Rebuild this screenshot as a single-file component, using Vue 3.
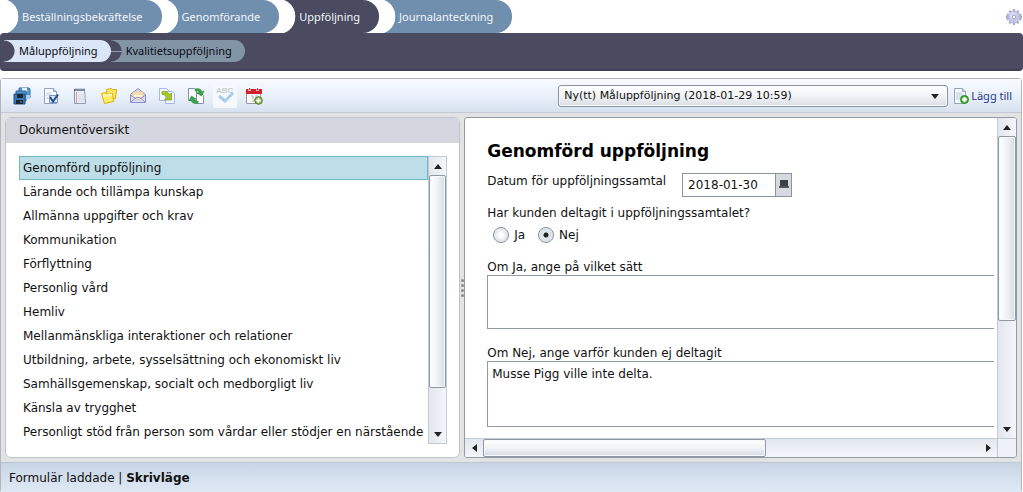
<script setup>
import { ref } from 'vue'

const tabs = ['Beställningsbekräftelse', 'Genomförande', 'Uppföljning', 'Journalanteckning']
const activeTab = ref(2)
const subTabs = ['Måluppföljning', 'Kvalitietsuppföljning']
const activeSub = ref(0)
const sections = [
  'Genomförd uppföljning',
  'Lärande och tillämpa kunskap',
  'Allmänna uppgifter och krav',
  'Kommunikation',
  'Förflyttning',
  'Personlig vård',
  'Hemliv',
  'Mellanmänskliga interaktioner och relationer',
  'Utbildning, arbete, sysselsättning och ekonomiskt liv',
  'Samhällsgemenskap, socialt och medborgligt liv',
  'Känsla av trygghet',
  'Personligt stöd från person som vårdar eller stödjer en närstående',
]
const activeSection = ref(0)
const date = ref('2018-01-30')
const attended = ref('nej')
const how = ref('')
const why = ref('Musse Pigg ville inte delta.')
</script>

<template>
  <div class="page">
    <header class="top">
      <nav class="tabs">
        <button v-for="(t, i) in tabs" :key="t" class="tab" :class="{ active: i === activeTab }" @click="activeTab = i">{{ t }}</button>
      </nav>
      <button class="gear" aria-label="Inställningar">
        <svg width="18" height="18" viewBox="0 0 18 18">
          <path d="M9 1v16M1 9h16M4.300 2.500l9.400 13M13.700 2.500l-9.400 13M1.600 6.500l14.800 5M16.400 6.500l-14.800 5" stroke="#a3a5cd" stroke-width="2" />
          <circle cx="9" cy="9" r="6" fill="#c5c6e6" stroke="#b0b2d8" />
          <circle cx="8" cy="7.500" r="3.500" fill="#d9daf2" />
          <circle cx="9" cy="9" r="1.800" fill="#fff" stroke="#a0a2cc" />
        </svg>
      </button>
    </header>

    <nav class="subbar">
      <button v-for="(t, i) in subTabs" :key="t" class="sub" :class="{ active: i === activeSub }" @click="activeSub = i">{{ t }}</button>
    </nav>

    <main class="shell">
      <div class="toolbar">
        <div class="tools">
          <button class="tool" aria-label="Spara">
            <svg width="18" height="18" viewBox="0 0 18 18">
              <path d="M6 1h10l1 1v9H6z" fill="#5b9bd5" stroke="#3b6ea8" />
              <path d="M9 1h5v4H9z" fill="#e4f0fb" />
              <path d="M3 4h10v10H3z" fill="#4f93cf" stroke="#2f6296" />
              <path d="M1 7h11v10H1z" fill="#3478b8" stroke="#28537e" />
              <path d="M4 7h6v4H4z" fill="#20242c" /><path d="M3 13h7v4H3z" fill="#1d2733" /><path d="M7 14h2v2H7z" fill="#4b5d70" />
              <path d="M13 8h4v4h-4z" fill="#a8cdf0" />
            </svg>
          </button>
          <button class="tool" aria-label="Kontrollera formulär">
            <svg width="18" height="18" viewBox="0 0 18 18">
              <path d="M2.500 1.500h9l3 3v12h-12z" fill="#f7faff" stroke="#8fa3c4" /><path d="M11.500 1.500v3h3" fill="#c9d8ee" stroke="#8fa3c4" />
              <path d="M4 6h5M4 8h6M4 11h3" stroke="#c0cee2" />
              <path d="M7.500 8.500h8v7h-8z" fill="#dbe6f7" stroke="#7f9ac6" />
              <path d="M8 10l3 4.500 5-7" fill="none" stroke="#244c94" stroke-width="2" />
            </svg>
          </button>
          <button class="tool" aria-label="Anteckning">
            <svg width="18" height="18" viewBox="0 0 18 18">
              <path d="M3.500 2.500h10l1 14h-11z" fill="#e9edf5" stroke="#8c99b0" /><path d="M3 2h11v2H3z" fill="#59657a" />
              <path d="M5 1v3M7 1v3M9 1v3M11 1v3M13 1v3" stroke="#a8b4c6" />
              <path d="M5.500 5v11" stroke="#d99" /><path d="M7 8h7M7 10h7M7 12h7M7 14h7" stroke="#d3dae6" />
            </svg>
          </button>
          <button class="tool" aria-label="Mappar">
            <svg width="18" height="18" viewBox="0 0 18 18">
              <path d="M6.500 2.500l5-1 1 1h4l-1 9-8 1z" fill="#ffe65a" stroke="#d5ad1c" />
              <path d="M1.500 6.500l4-1 1 2 6-1 1 8-9 2z" fill="#ffed6a" stroke="#dcae16" /><path d="M3 9l9-1.500" stroke="#fff8ba" stroke-width="2" />
            </svg>
          </button>
          <button class="tool" aria-label="Meddelande">
            <svg width="18" height="18" viewBox="0 0 18 18">
              <path d="M1.500 7.500L9 1.500l7.500 6v8h-15z" fill="#dcddf6" stroke="#8d8fcb" />
              <path d="M4 5h10v5l-5 3-5-3z" fill="#fff4d6" stroke="#e2bd84" /><path d="M5 7h8" stroke="#edc78b" />
              <path d="M1.500 15.500L7 10.500h4l5.500 5M1.500 8L7 12M16.500 8L11 12" fill="none" stroke="#9294ce" />
            </svg>
          </button>
          <button class="tool" aria-label="Kopiera till">
            <svg width="18" height="18" viewBox="0 0 18 18">
              <path d="M1.500 1.500h7l2 2v10h-9z" fill="#f4f7ff" stroke="#a9b6e0" /><path d="M7.500 4.500h7l2 2v10h-9z" fill="#eef3ff" stroke="#a9b6e0" />
              <path d="M4 4.500c4-.5 6 .5 7.500 3L13.500 6v7H6.500L9 10.500C8 8.500 6.500 7.500 4 7.500z" fill="#a7c91e" stroke="#7fa112" stroke-width=".7" />
            </svg>
          </button>
          <button class="tool" aria-label="Uppdatera">
            <svg width="18" height="18" viewBox="0 0 18 18">
              <path d="M1.500 1.500h6l2 2v10h-8z" fill="#fff" stroke="#7d90b8" /><path d="M9.500 6.500h5l2 2v8h-7z" fill="#fff" stroke="#7d90b8" />
              <path d="M8 2c4-1 6 0 7 3l2-1-2.500 5L10 6l2-.5C11 3.500 10 3.500 8 4zM11 16c-4 1-6 0-7-3l-2 1 2.500-5L9 12l-2 .5c1 2 2 2 4 1.500z" fill="#39a845" stroke="#238532" stroke-width=".6" />
            </svg>
          </button>
          <button class="tool faded" aria-label="Stavningskontroll">
            <svg width="20" height="20" viewBox="0 0 20 20">
              <text x="1" y="7" font-family="Liberation Sans, sans-serif" font-size="8" font-weight="bold" fill="#c3d0ca">ABC</text>
              <path d="M4 10l6 5L18 7" fill="none" stroke="#a9ccec" stroke-width="3" />
            </svg>
          </button>
          <button class="tool" aria-label="Ny kalenderpost">
            <svg width="18" height="18" viewBox="0 0 18 18">
              <path d="M1.500 3.500h14v13h-14z" fill="#f8f8fa" stroke="#9b9ba5" /><path d="M1 2h16v5H1z" fill="#d5202c" />
              <path d="M4.500 0v4M12.500 0v4" stroke="#fff" stroke-width="2" /><path d="M4.500 1v2M12.500 1v2" stroke="#555" />
              <path d="M6 9h2v6M10 9h3" fill="none" stroke="#b4b4bc" />
              <circle cx="13.500" cy="13.500" r="3.800" fill="#8fb654" stroke="#527d20" /><path d="M11 13.500h5M13.500 11v5" stroke="#fff" stroke-width="1.600" />
            </svg>
          </button>
        </div>
        <div class="picker">
          <select aria-label="Dokument"><option>Ny(tt) Måluppföljning (2018-01-29 10:59)</option></select>
        </div>
        <button class="add">
          <svg width="16" height="16" viewBox="0 0 16 16">
            <path d="M1.500.5h8l3 3v12h-11z" fill="#f4f7fc" stroke="#94a3ba" /><path d="M9.500.5v3h3" fill="#d2dcec" stroke="#94a3ba" />
            <path d="M3 5h6M3 7h7M3 9h6M3 11h4" stroke="#bdc9dc" /><circle cx="11.500" cy="11.500" r="4" fill="#45b035" stroke="#2f8c25" />
            <path d="M9 11.500h5M11.500 9v5" stroke="#fff" stroke-width="2" />
          </svg>
          <span>Lägg till</span>
        </button>
      </div>

      <div class="work">
        <section class="outline">
          <h2>Dokumentöversikt</h2>
          <div class="listbox">
            <ul>
              <li v-for="(s, i) in sections" :key="s">
                <button :class="{ selected: i === activeSection }" @click="activeSection = i">{{ s }}</button>
              </li>
            </ul>
            <div class="vbar">
              <button class="arrow up" aria-label="Rulla upp"></button>
              <div class="track"><div class="thumb list-thumb"></div></div>
              <button class="arrow down" aria-label="Rulla ned"></button>
            </div>
          </div>
        </section>

        <div class="splitter"><i></i><i></i><i></i><i></i></div>

        <section class="detail">
          <form class="form" @submit.prevent>
            <h1>Genomförd uppföljning</h1>
            <div class="date-row">
              <label for="date">Datum för uppföljningssamtal</label>
              <div class="date">
                <input id="date" v-model="date" type="text" />
                <button type="button" aria-label="Välj datum">
                  <svg width="12" height="12" viewBox="0 0 12 12"><path d="M2 1h8v7H2z" fill="#3c3f46" /><path d="M1 7h10v2H1z" fill="#55585f" /></svg>
                </button>
              </div>
            </div>
            <fieldset>
              <legend>Har kunden deltagit i uppföljningssamtalet?</legend>
              <div class="radios">
                <label><input v-model="attended" type="radio" name="attended" value="ja" />Ja</label>
                <label><input v-model="attended" type="radio" name="attended" value="nej" />Nej</label>
              </div>
            </fieldset>
            <label class="area-label" for="how">Om Ja, ange på vilket sätt</label>
            <textarea id="how" v-model="how" class="short"></textarea>
            <label class="area-label" for="why">Om Nej, ange varför kunden ej deltagit</label>
            <textarea id="why" v-model="why" class="tall"></textarea>
          </form>
          <div class="vbar">
            <button class="arrow up" aria-label="Rulla upp"></button>
            <div class="track"><div class="thumb form-thumb"></div></div>
            <button class="arrow down" aria-label="Rulla ned"></button>
          </div>
          <div class="hbar">
            <button class="arrow left" aria-label="Rulla vänster"></button>
            <div class="track"><div class="thumb wide-thumb"></div></div>
            <button class="arrow right" aria-label="Rulla höger"></button>
          </div>
          <div class="corner"></div>
        </section>
      </div>

      <footer class="status">Formulär laddade | <strong>Skrivläge</strong></footer>
    </main>
  </div>
</template>

<style>
body { background: #fff; }
</style>

<style scoped>
* { box-sizing: border-box; }
button, input, select, textarea { font: inherit; color: inherit; margin: 0; }
button { padding: 0; border: 0; background: none; cursor: pointer; }
svg { display: block; }
.page {
  display: flex; flex-direction: column; min-height: 100vh;
  font-family: "DejaVu Sans", Verdana, sans-serif; font-size: 12px; line-height: 16px; color: #111;
}
.tabs, .subbar, .add { font-family: "Noto Sans", sans-serif; font-size: 11px; }
.top { display: flex; justify-content: space-between; align-items: center; height: 33px; padding: 0 0 0 2px; }
.tabs { display: flex; }
.tab {
  height: 33px; padding: 0 19px 0 20px; color: #f2f6fb; border-radius: 0 16px 16px 0;
  background: radial-gradient(ellipse 17px 18px at 0 50%, #fff 94%, #708fae 98%);
}
.tab.active { background: radial-gradient(ellipse 17px 18px at 0 50%, #fff 94%, #4a4a60 98%); }
.subbar {
  display: flex; align-items: center; height: 38px; padding-left: 4px; background: #4a4a60;
  border-bottom: 2px solid #414156; border-radius: 4px;
}
.sub {
  height: 22px; padding: 0 13px 0 15px; border-radius: 0 11px 11px 0; color: #080a10;
  background: linear-gradient(#8b9bb0, #8b9bb0) 0 50% / 11px 1px no-repeat, radial-gradient(circle at 0 50%, #4a4a60 10px, #8295a7 11px);
}
.sub.active { background: radial-gradient(circle at 0 50%, #4a4a60 10px, #dbe6f8 11px); }
.shell {
  display: flex; flex-direction: column; flex: 1; margin: 7px 1px 1px 0;
  border: 1px solid #b4b6bb; border-radius: 3px; background: #e2e3e5;
}
.toolbar {
  display: flex; align-items: center; height: 34px; padding: 0 9px; border-bottom: 1px solid #c3cad3;
  background: linear-gradient(#f8faff, #eaf1fb 50%, #d7e1ef);
}
.tools { display: flex; gap: 5px; flex: 1; }
.tool { display: grid; place-items: center; width: 24px; height: 24px; border-radius: 2px; }
.faded { background: #f5f8fc; }
.picker { position: relative; width: 390px; margin-right: 5px; }
.picker::after {
  content: ""; position: absolute; right: 9px; top: 9px; border: 4px solid transparent;
  border-top: 5px solid #222; border-bottom: 0; pointer-events: none;
}
.picker select {
  display: block; width: 100%; height: 22px; padding: 0 5px; appearance: none; border: 1px solid #8a939f; font-size: 11px;
  border-radius: 3px; background: linear-gradient(#fff, #f1f3f6 50%, #dadfe5); box-shadow: inset 0 0 0 1px #f8fafc;
}
.add { display: flex; align-items: center; gap: 2px; color: #26388a; white-space: nowrap; }
.work { display: flex; flex: 1; padding: 4px 4px; }
.outline {
  display: flex; flex-direction: column; flex: 455 1 0; min-width: 0; background: #fff;
  border: 1px solid #c2c4ca; border-radius: 6px; overflow: hidden;
}
h2 { margin: 0; height: 25px; padding-left: 13px; font-size: 12px; font-weight: normal; line-height: 25px; background: #d5d7e0; }
.listbox { display: flex; margin: 13px 12px 13px 13px; }
ul { flex: 1; min-width: 0; margin: 0; padding: 0; list-style: none; }
li button {
  display: block; width: 100%; height: 24px; padding: 0 3px; text-align: left;
  border: 1px solid transparent; white-space: nowrap;
}
li button.selected { background: #bddde8; border-color: #70b8c8; }
.vbar { display: flex; flex-direction: column; width: 19px; border: 1px solid #c3cad1; background: linear-gradient(90deg, #e3e7ee, #f3f6fa); }
.track { flex: 1; min-width: 0; }
.arrow { width: 18px; height: 18px; flex: none; display: grid; place-items: center; }
.arrow::before { content: ""; border: 4px solid transparent; }
.up::before { border-bottom: 5px solid #222; border-top: 0; }
.down::before { border-top: 5px solid #222; border-bottom: 0; }
.left::before { border-right: 5px solid #222; border-left: 0; }
.right::before { border-left: 5px solid #222; border-right: 0; }
.thumb { border: 1px solid #8e99a6; border-radius: 2px; background: linear-gradient(90deg, #fff, #f0f3f6 50%, #d3dbe3); box-shadow: inset 0 0 0 1px #f6f8fa; }
.list-thumb { height: 85%; }
.form-thumb { height: 65%; }
.splitter { display: flex; flex-direction: column; align-items: center; justify-content: center; gap: 2px; width: 4px; }
.splitter i { width: 3px; height: 3px; border-radius: 50%; background: #858991; }
.detail {
  display: grid; grid-template-columns: 1fr 19px; grid-template-rows: 1fr 19px; flex: 553 1 0; min-width: 0;
  background: #fff; border: 1px solid #939ca6; border-radius: 3px; overflow: hidden;
}
.detail .vbar { border-width: 0 0 0 1px; }
.form { min-width: 0; padding: 20px 3px 8px 22px; }
h1 { margin: 0 0 9px; font-size: 17px; line-height: 26px; color: #000; }
.date-row { display: flex; align-items: flex-start; gap: 16px; height: 32px; }
.date { display: flex; width: 110px; height: 24px; border: 1px solid #8c939b; }
.date input { flex: 1; min-width: 0; border: 0; padding: 0 5px; outline: 0; }
.date button { display: grid; place-items: center; width: 16px; border-left: 1px solid #8c939b; background: #d6d9dd; }
fieldset { margin: 0; padding: 0; border: 0; }
legend { padding: 0; height: 22px; line-height: 16px; }
.radios { display: flex; gap: 13px; padding: 0 0 0 6px; }
.radios label { display: flex; align-items: center; gap: 5px; }
input[type="radio"] {
  appearance: none; width: 16px; height: 16px; border: 1px solid #818b96; border-radius: 50%;
  background: radial-gradient(circle, #fff 2px, #dfe4e9 6px, #fafbfc 7px);
}
input[type="radio"]:checked { background: radial-gradient(circle, #222 2px, #e1e7ed 3px, #d9e0e7 6px, #f4f6f8 7px); }
.area-label { display: block; margin-top: 17px; line-height: 15px; }
textarea {
  display: block; width: 100%; padding: 4px; resize: none; overflow: hidden; outline: 0;
  border: 1px solid #919aa4; border-right: 0; border-radius: 0; background: #fff; line-height: 16px;
}
.short { height: 54px; }
.tall { height: 66px; }
.hbar { display: flex; min-width: 0; border-top: 1px solid #c3cad1; background: linear-gradient(#e3e7ee, #f3f6fa); }
.hbar .track { display: flex; }
.wide-thumb { width: 57%; background: linear-gradient(#fff, #f0f2f5 50%, #d6dce3); }
.corner { border: solid #c3cad1; border-width: 1px 0 0 1px; background: #eef1f6; }
.status {
  height: 30px; padding-left: 8px; line-height: 30px; border-top: 1px solid #bcc6d1;
  background: linear-gradient(#c9d5e4, #dfe9f6);
}
</style>
